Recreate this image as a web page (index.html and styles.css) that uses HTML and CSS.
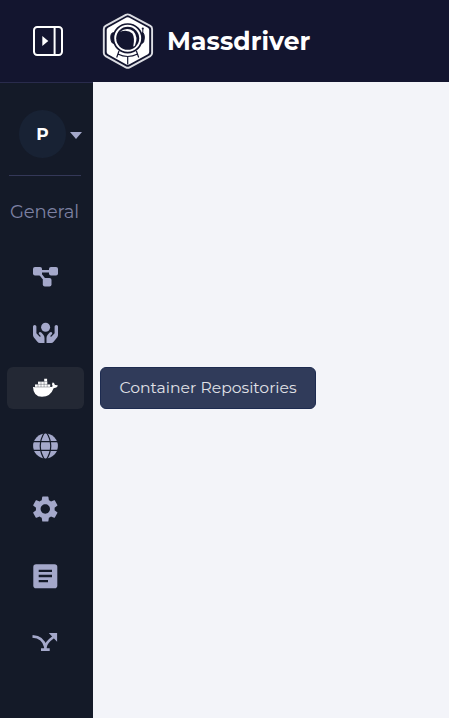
FILE: index.html
```html
<!DOCTYPE html>
<html lang="en">
<head>
<meta charset="utf-8">
<title>Massdriver</title>
<link rel="stylesheet" href="styles.css">
</head>
<body>
<header class="header">
  <button class="toggle" aria-label="Expand sidebar">
    <svg width="32" height="32" viewBox="0 0 32 32"><rect x="2" y="2" width="28" height="28" rx="3.2" fill="none" stroke="currentColor" stroke-width="2"/><path d="M22.6 2v28" stroke="currentColor" stroke-width="2"/><path d="M10.3 11v10l6-5z" fill="currentColor"/></svg>
  </button>
  <svg class="logo" width="52" height="56" viewBox="0 0 52 56">
    <path d="M23.8 1.9q1.9-1 3.8 0l20.700 11q1.800 1 1.800 3v24.200q0 2-1.800 3l-20.700 11.200q-1.900 1-3.800 0L3.600 43.100q-1.800-1-1.800-3V15.900q0-2 1.800-3z" fill="none" stroke="#dcdde3" stroke-width="1.900"/>
    <path d="M24.400 4.600q1.300-.7 2.600 0l18.900 10.100q1.300.7 1.300 2.200v22.200q0 1.500-1.300 2.200L27 51.600q-1.300.7-2.600 0L6 41.300q-1.300-.7-1.300-2.200V16.900q0-1.500 1.300-2.200z" fill="#fff"/>
    <path d="M11.500 19.500q-3 .5-2.700 5.500t2.700 5.500zM40 19.500q2.500.5 2.300 5.500t-2.300 5.500z" fill="#13152f" stroke="#13152f"/>
    <path d="M40.800 21v-5" stroke="#13152f" stroke-width="1"/><circle cx="40.800" cy="15.500" r="1.100" fill="#13152f"/>
    <path d="M17 38l-2.300 6.500M34.400 38l2.300 6.500M15.800 41q9.900 5 19.800 0M25.700 43.500v8" fill="none" stroke="#13152f" stroke-width="1.200"/>
    <circle cx="25.700" cy="25.300" r="14.300" fill="#fff" stroke="#13152f" stroke-width="1.700"/>
    <circle cx="25.700" cy="25.300" r="11.500" fill="#13152f"/>
    <path d="M18 18.700Q25 13.500 31.500 18.300 36.500 24 33 32.500 31.700 34 31.300 33.300 33 25 30.400 20.500 26 16.300 18 18.700Z" fill="#fff"/>
  </svg>
  <span class="brand">Massdriver</span>
</header>
<div class="shell">
  <aside class="sidebar">
    <div class="account"><span class="avatar">P</span><i class="caret"></i></div>
    <hr class="rule">
    <h2 class="label"><span>General</span></h2>
    <nav class="nav">
      <a class="item"><svg viewBox="0 0 30 30"><g fill="currentColor"><rect x="3" y="6" width="9" height="8.500" rx="2"/><rect x="19" y="6" width="9" height="8.500" rx="2"/><rect x="12.800" y="17" width="8.700" height="8.500" rx="2"/></g><path d="M8 10.300h15M9 11.500l7 9" stroke="currentColor" stroke-width="2.600"/></svg></a>
      <a class="item gap-sm"><svg viewBox="0 0 30 30" fill="currentColor"><circle cx="15.600" cy="9.300" r="4.500"/><path id="hand" d="M3 8.600Q3 7.100 4.700 7.100T6.400 8.600V15.200L9.500 18.400Q10.100 18.900 10.500 18.400T10.300 17.400L8.900 15.900Q8.400 14.900 9.300 14.200T11.300 14.400L13.300 16.700Q14.500 18.200 14.500 20V25H9.800Q8.400 25 7.400 23.800L3.900 19.400Q3 18.300 3 16.900Z"/><use href="#hand" transform="translate(31 0) scale(-1 1)"/></svg></a>
      <a class="item active gap-xs"><svg viewBox="0 0 30 30"><path d="M3 14H21.200Q22.400 13.600 22.600 12.900 21.200 10.900 22.900 9.200 24.800 10.300 24.900 12 26.900 11.700 28 12.700 26.900 15.100 23.600 15.300 20.600 23.800 12 23.800 3.400 23.800 3 14Z" fill="currentColor"/><path d="M5 11.200h15.200v3H5zM8 8.500h9.300v3H8zM14.200 5.800h2.900v3h-2.900z" fill="currentColor"/><path d="M8 11.200v2.800M11 8.500v5.500M14.100 8.500v5.500M17.200 11.200v2.800M5 11.300h15M8 8.600h9M4 14h16" stroke="#232834" stroke-width=".35"/></svg></a>
      <a class="item gap-md"><svg viewBox="0 0 30 30"><circle cx="15.500" cy="15" r="12.400" fill="currentColor"/><path d="M3 10.700h25M3 19.300h25M15.500 0q-10.500 15 0 30M15.500 0q10.500 15 0 30" fill="none" stroke="#141a28" stroke-width="1.200"/></svg></a>
      <a class="item gap-lg"><svg viewBox="0 0 30 30"><path transform="translate(-.3 -.6) scale(1.300)" fill="currentColor" d="M19.140 12.940c.04-.3.06-.61.06-.94 0-.32-.02-.64-.07-.94l2.030-1.580c.18-.14.23-.41.12-.61l-1.920-3.320c-.12-.22-.37-.29-.59-.22l-2.390.96c-.5-.38-1.030-.7-1.620-.94l-.36-2.540c-.04-.24-.24-.41-.48-.41h-3.840c-.24 0-.43.17-.47.41l-.36 2.540c-.59.24-1.130.57-1.620.94l-2.390-.96c-.22-.08-.47 0-.59.22L2.740 8.870c-.12.21-.08.47.12.61l2.030 1.580c-.05.3-.09.63-.09.94s.02.64.07.94l-2.030 1.580c-.18.14-.23.41-.12.61l1.920 3.320c.12.22.37.29.59.22l2.390-.96c.5.38 1.030.7 1.620.94l.36 2.540c.05.24.24.41.48.41h3.840c.24 0 .44-.17.47-.41l.36-2.540c.59-.24 1.130-.56 1.620-.94l2.390.96c.22.08.47 0 .59-.22l1.920-3.320c.12-.22.07-.47-.12-.61l-2.010-1.580zM12 15.600c-1.980 0-3.600-1.620-3.600-3.600s1.620-3.600 3.600-3.600 3.600 1.620 3.600 3.600-1.620 3.600-3.600 3.600z"/></svg></a>
      <a class="item gap-2xl"><svg viewBox="0 0 30 30"><rect x="3.300" y="3.200" width="24" height="24" rx="2.800" fill="currentColor"/><path d="M8.700 9.800H22M8.700 15H22M8.700 20.200H18" stroke="#141a28" stroke-width="2.300"/></svg></a>
      <a class="item gap-xl"><svg viewBox="0 0 30 30"><path d="M2.500 9.300Q13.500 10 15.400 20Q16 15.500 23.500 10M15.400 18v4" fill="none" stroke="currentColor" stroke-width="2.700"/><path d="M18.800 6h8.300v8.700zM11 21.300h8.700V24H11z" fill="currentColor"/></svg></a>
    </nav>
  </aside>
  <main class="content"></main>
</div>
<div class="tooltip" role="tooltip"><span>Container Repositories</span></div>
</body>
</html>
```
FILE: styles.css
```css
* { box-sizing: border-box; }
body {
  margin: 0;
  height: 718px;
  overflow: hidden;
  display: flex;
  flex-direction: column;
  background: #f3f4f9;
  font-family: Montserrat, Inter, sans-serif;
}
.header {
  height: 82px;
  flex: none;
  display: flex;
  align-items: center;
  padding-left: 32px;
  background: #13152f;
  color: #fff;
}
.toggle {
  display: flex;
  padding: 0;
  border: 0;
  background: none;
  color: #fff;
}
.logo { margin-left: 38px; }
.brand {
  margin-left: 13px;
  font-size: 25px;
  font-weight: 700;
  letter-spacing: .1px;
}
.shell { flex: 1; display: flex; }
.sidebar {
  width: 93px;
  flex: none;
  border-top: 1px solid #292b4c;
  background: #141a28;
  color: #a4a8ca;
}
.content { flex: 1; }
.account {
  display: flex;
  align-items: center;
  height: 48px;
  margin: 27px 0 0 19px;
}
.avatar {
  width: 47px;
  height: 48px;
  border-radius: 50%;
  background: #182234;
  color: #fff;
  font-size: 17px;
  font-weight: 700;
  line-height: 48px;
  text-align: center;
}
.caret {
  margin: 3px 0 0 4px;
  border: 6.5px solid transparent;
  border-top: 7px solid #a4a8ca;
  border-bottom: 0;
}
.rule {
  width: 72px;
  height: 1px;
  margin: 17px 0 0 9px;
  border: 0;
  background: #343858;
}
.label {
  margin: 24px 0 0 10px;
  font-size: 18px;
  line-height: 24px;
  font-weight: 400;
  letter-spacing: -.1px;
  color: #7d81a3;
}
.nav {
  display: flex;
  flex-direction: column;
  margin: 31px 9px 0 7px;
}
.item {
  height: 42px;
  padding: 6px 0 0 23px;
  border-radius: 6px;
}
.item svg { display: block; width: 30px; height: 30px; }
.active { background: #232834; color: #fff; }
.gap-xs { margin-top: 13px; }
.gap-sm { margin-top: 15px; }
.gap-md { margin-top: 16px; }
.gap-lg { margin-top: 21px; }
.gap-xl { margin-top: 24px; }
.gap-2xl { margin-top: 25px; }
.tooltip {
  position: absolute;
  left: 100px;
  top: 367px;
  width: 216px;
  height: 42px;
  border: 1px solid #1d2b50;
  border-radius: 6px;
  background: #303b5a;
  color: #e0e1e7;
  font-size: 15.65px;
  line-height: 40px;
  text-align: center;
  white-space: nowrap;
}
```
